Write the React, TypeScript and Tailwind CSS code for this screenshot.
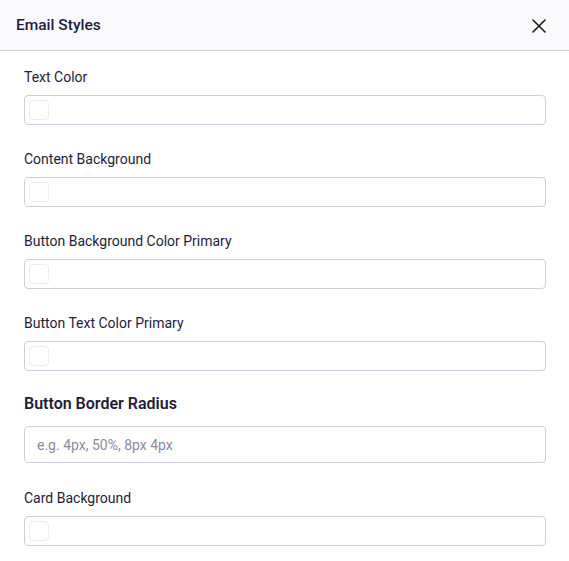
import React from "react";

// colour fields in order; the radius field is rendered separately
const colorFields = [
  "Text Color",
  "Content Background",
  "Button Background Color Primary",
  "Button Text Color Primary",
];

function ColorInput({ label }: { label: string }) {
  return (
    <div className="flex flex-col gap-2">
      <label className="text-[14px] leading-5 text-[#1e1c3a]">{label}</label>
      <div className="h-[30px] rounded-[4px] border border-[#cfcedb] bg-white flex items-center px-[4px]">
        <div className="w-5 h-5 rounded-[4px] border border-[#ececf1] bg-white" />
      </div>
    </div>
  );
}

export default function App() {
  return (
    <div
      className="w-[569px] h-[561px] bg-white flex flex-col"
      style={{ fontFamily: "Roboto, 'Liberation Sans', sans-serif" }}
    >
      {/* Header */}
      <div className="h-[51px] shrink-0 bg-[#f9f9fb] border-b border-[#d2d1dc] flex items-center justify-between pl-4 pr-[23px] pt-[2px]">
        <h2 className="text-[15.5px] font-medium text-[#1e1c3a]">Email Styles</h2>
        <button className="w-[14px] h-[14px] flex items-center justify-center">
          <svg width="14" height="14" viewBox="0 0 14 14" fill="none">
            <path d="M1 1L13 13M13 1L1 13" stroke="#1a1a1a" strokeWidth="1.6" strokeLinecap="round" />
          </svg>
        </button>
      </div>

      {/* Fields */}
      <div className="flex flex-col pl-6 pr-[23px] pt-4">
        <div className="flex flex-col gap-6">
          {colorFields.map((f) => (
            <ColorInput key={f} label={f} />
          ))}
        </div>

        <div className="flex flex-col gap-[10px] mt-[21px]">
          <label className="text-[16px] leading-6 font-semibold text-[#1e1c3a]">
            Button Border Radius
          </label>
          <input
            placeholder="e.g. 4px, 50%, 8px 4px"
            className="h-[37px] rounded-[4px] border border-[#cfcedb] px-3 text-[14px] text-[#1e1c3a] placeholder:text-[#8b8a99] outline-none"
          />
        </div>

        <div className="mt-[25px]">
          <ColorInput label="Card Background" />
        </div>
      </div>
    </div>
  );
}
